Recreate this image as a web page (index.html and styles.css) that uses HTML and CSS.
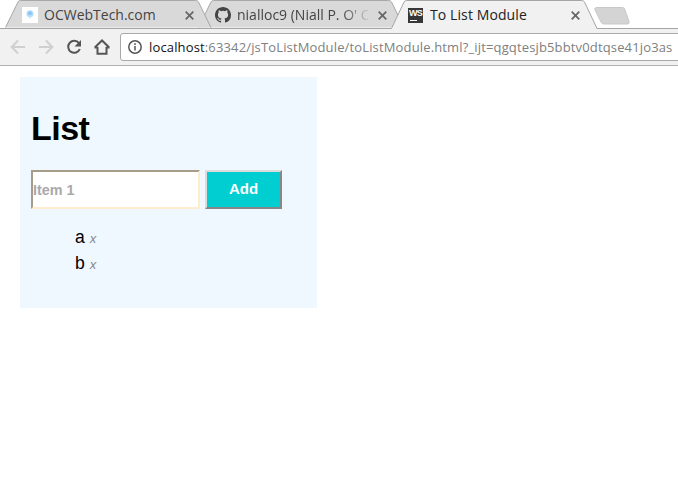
FILE: index.html
```html
<!DOCTYPE html>
<html lang="en">
<head>
<meta charset="utf-8">
<title>To List Module</title>
<link rel="stylesheet" href="styles.css">
</head>
<body>
<header class="browser">
  <div class="tabs">
    <div class="tab tab-first">
      <svg class="shape" viewBox="0 0 207 29" preserveAspectRatio="none"><path d="M.5 28.5 13 2Q13.700.5 15.500.5H190.500Q192.500.5 193.500 2L206 28.500"/></svg>
      <svg class="favicon" viewBox="0 0 16 16"><path fill="#fff" d="M0 0h16v16H0z"/><circle cx="8" cy="6.700" r="3.500" fill="#b5daf7"/><circle cx="8" cy="6.300" r="1.800" fill="#87c3f2"/><path d="M6.500 9.500h3L8 12z" fill="#c8e4fa"/></svg>
      <span class="title title-one">OCWebTech.com</span>
      <svg class="close" viewBox="0 0 9 9"><path d="m.7.7 7.600 7.600M8.300.7.7 8.300"/></svg>
    </div>
    <div class="tab">
      <svg class="shape" viewBox="0 0 207 29" preserveAspectRatio="none"><path d="M.5 28.5 13 2Q13.700.5 15.500.5H190.500Q192.500.5 193.500 2L206 28.500"/></svg>
      <svg class="favicon" viewBox="0 0 16 16"><path fill="#444" d="M8 0C3.58 0 0 3.58 0 8c0 3.54 2.29 6.53 5.47 7.59.4.07.55-.17.55-.38 0-.19-.01-.82-.01-1.49-2.01.37-2.53-.49-2.69-.94-.09-.23-.48-.94-.82-1.13-.28-.15-.68-.52-.01-.53.63-.01 1.08.58 1.23.82.72 1.21 1.87.87 2.33.66.07-.52.28-.87.51-1.07-1.78-.2-3.64-.89-3.64-3.95 0-.87.31-1.59.82-2.15-.08-.2-.36-1.02.08-2.12 0 0 .67-.21 2.2.82a7.4 7.4 0 0 1 4 0c1.53-1.04 2.2-.82 2.2-.82.44 1.1.16 1.92.08 2.12.51.56.82 1.27.82 2.15 0 3.07-1.87 3.75-3.65 3.95.29.25.54.73.54 1.48 0 1.07-.01 1.93-.01 2.2 0 .21.15.46.55.38A8.01 8.01 0 0 0 16 8c0-4.42-3.58-8-8-8"/></svg>
      <span class="title title-two">nialloc9 (Niall P. O' C</span>
      <svg class="close" viewBox="0 0 9 9"><path d="m.7.7 7.600 7.600M8.300.7.7 8.300"/></svg>
    </div>
    <div class="tab tab-active">
      <svg class="shape" viewBox="0 0 207 29"><path d="M.5 28.5 13 2Q13.700.5 15.500.5H190.500Q192.500.5 193.500 2L206 28.500V29.500H.5"/></svg>
      <span class="favicon webstorm">WS</span>
      <span class="title title-three">To List Module</span>
      <svg class="close" viewBox="0 0 9 9"><path d="m.7.7 7.600 7.600M8.300.7.7 8.300"/></svg>
    </div>
    <svg class="new-tab" viewBox="0 0 36 18"><path d="M2.500.5h26q1.500 0 2.200 1.500L35 14.500q.8 2.500-1.500 2.500H10q-2 0-3-2L1 3Q.2.5 2.500.5z"/></svg>
  </div>
  <nav class="toolbar">
    <svg class="nav-icon faded" viewBox="0 0 16 16"><path d="M15 8H2M8 1.500 1.700 8 8 14.500"/></svg>
    <svg class="nav-icon faded" viewBox="0 0 16 16"><path d="M1 8h13M8 1.500 14.300 8 8 14.500"/></svg>
    <svg class="nav-icon" viewBox="0 0 16 16"><path d="M13 4.200A6 6 0 1 0 13.800 10"/><path class="solid" d="M15 1v6.500H8.500z"/></svg>
    <svg class="nav-icon home" viewBox="0 0 16 16"><path d="M3.500 8v6.800h9V8M.8 8.500 8 1.500l7.200 7M.5 8.500h3m9 0h3"/></svg>
    <div class="address">
      <svg class="info" viewBox="0 0 14 14"><circle cx="7" cy="7" r="6.200"/><path d="M7 6v4.500M7 3.300v1.600"/></svg>
      <span class="url"><b>localhost</b>:63342/jsToListModule/toListModule.html?_ijt=qgqtesjb5bbtv0dtqse41jo3as</span>
    </div>
  </nav>
</header>
<main class="panel">
  <h1>List</h1>
  <form class="entry">
    <input type="text" placeholder="Item 1">
    <button type="button">Add</button>
  </form>
  <ul>
    <li>a <i>x</i></li>
    <li>b <i>x</i></li>
  </ul>
</main>
</body>
</html>
```
FILE: styles.css
```css
* { box-sizing: border-box; }
body {
  margin: 0;
  height: 481px;
  overflow: hidden;
  background: #fff;
  font-family: "Liberation Sans", Arial, sans-serif;
}
.browser {
  height: 66px;
  background: #f1f1f1;
  border-bottom: 1px solid #b0b0b0;
  font-family: "Open Sans", "Noto Sans", sans-serif;
}
.tabs {
  display: flex;
  height: 29px;
  padding-left: 5px;
  background: #fff;
  border-bottom: 1px solid #a5a5a5;
}
.tab {
  position: relative;
  display: flex;
  align-items: center;
  flex: none;
  width: 207px;
  height: 28px;
  margin-right: -14px;
  padding: 0 18px 0 17px;
  isolation: isolate;
}
.tab-first { z-index: 1; }
.tab-active { z-index: 2; height: 29px; }
.shape {
  position: absolute;
  inset: 0;
  z-index: -1;
  width: 207px;
  height: 100%;
  fill: #d9d9d9;
  stroke: #a5a5a5;
}
.tab-active .shape { fill: #f1f1f1; }
.favicon { flex: none; width: 16px; height: 16px; margin-top: 2px; }
.webstorm {
  width: 15px;
  height: 15px;
  margin: 2px 1px 0 0;
  background: linear-gradient(#fff, #fff) 2px 12px / 7px 1px no-repeat #373737;
  color: #fff;
  font: bold 9px/10px "Liberation Sans", sans-serif;
  text-align: center;
  letter-spacing: -.8px;
}
.title {
  flex: 1;
  min-width: 0;
  overflow: hidden;
  margin: 1px 12px 0 6px;
  color: #444;
  font-size: 14px;
  line-height: 20px;
  white-space: nowrap;
}
.title-two {
  margin-right: 10px;
  -webkit-mask-image: linear-gradient(90deg, #000 105px, transparent 134px);
  mask-image: linear-gradient(90deg, #000 105px, transparent 134px);
}
.title-three { color: #222; letter-spacing: .1px; }
.close {
  flex: none;
  width: 9px;
  height: 9px;
  margin-top: 2px;
  fill: none;
  stroke: #666;
  stroke-width: 1.7;
}
.new-tab {
  flex: none;
  width: 36px;
  height: 18px;
  margin: 7px 0 0 10px;
  fill: #d4d4d4;
  stroke: #c8c8c8;
}
.toolbar {
  display: flex;
  align-items: center;
  gap: 12px;
  height: 36px;
  padding-left: 10px;
}
.nav-icon {
  flex: none;
  width: 16px;
  height: 16px;
  fill: none;
  stroke: #555;
  stroke-width: 2;
}
.faded { stroke: #d0d0d0; }
.solid { fill: #555; stroke: none; }
.home { margin-right: -2px; }
.address {
  display: flex;
  align-items: center;
  flex: none;
  width: 570px;
  height: 28px;
  padding-left: 7px;
  background: #fff;
  border: 1px solid #a9a9a9;
  border-radius: 3px;
}
.info {
  flex: none;
  width: 14px;
  height: 14px;
  fill: none;
  stroke: #555;
  stroke-width: 1.5;
}
.url {
  margin-left: 7px;
  color: #808080;
  font-size: 13px;
  letter-spacing: .147px;
  white-space: nowrap;
}
.url b { color: #111; font-weight: 400; }
.panel {
  width: 297px;
  height: 231px;
  margin: 11px 0 0 20px;
  padding: 30px 11px 0;
  background: #f0f8ff;
}
h1 {
  margin: 0;
  font-size: 34px;
  letter-spacing: -.5px;
  line-height: 42px;
}
.entry {
  display: flex;
  gap: 5px;
  margin: 21px 0 0;
}
input {
  width: 169px;
  height: 39px;
  padding: 0;
  background: #fff;
  border: 2px solid;
  border-color: #a79c89 #ffebcd #ffebcd #a79c89;
  font: bold 14.4px "Liberation Sans", sans-serif;
}
input::placeholder { color: #a9a9a9; opacity: 1; }
button {
  width: 77px;
  height: 39px;
  padding: 0 0 2px;
  background: #00ced1;
  border: 2px solid;
  border-color: #dcdcdc #878787 #878787 #dcdcdc;
  color: #fff;
  font: bold 15px "Liberation Sans", sans-serif;
}
ul {
  margin: 15px 0 0;
  padding: 0 0 0 44px;
  list-style: none;
  font-size: 17.6px;
  line-height: 26px;
}
li i { color: #888; font-size: 13px; line-height: 1; }
```
